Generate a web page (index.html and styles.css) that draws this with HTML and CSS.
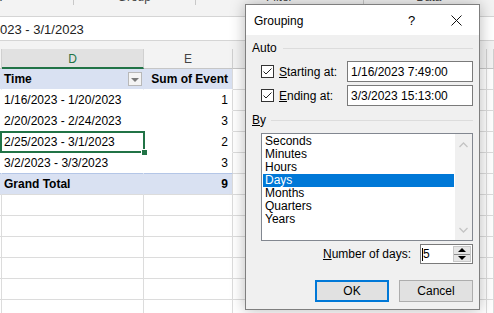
FILE: index.html
```html
<!DOCTYPE html>
<html lang="en">

<head>
  <meta charset="UTF-8">
  <meta name="viewport" content="width=device-width, initial-scale=1.0">
  <title>Grouping</title>
  <link rel="stylesheet" href="styles.css">
</head>

<body>
  <div class="ribbon">
    <div class="groups">
      <div class="group g1"><span>Active Field</span></div>
      <div class="group g2"><span>Group</span></div>
      <div class="group g3"><span>Filter</span></div>
      <div class="group g4"><span>Data</span></div>
    </div>
  </div>

  <div class="formula-bar">
    <span class="formula">023 - 3/1/2023</span>
  </div>

  <div class="sheet">
    <div class="row heads">
      <div class="cell"></div>
      <div class="cell sel-head">D</div>
      <div class="cell">E</div>
      <div class="cell">F</div>
      <div class="cell"></div>
    </div>

    <div class="row pv-head">
      <div class="cell"></div>
      <div class="cell label">
        <b>Time</b>
        <span class="filter-btn"></span>
      </div>
      <div class="cell value"><b>Sum of Event</b></div>
      <div class="cell"></div>
      <div class="cell"></div>
    </div>
    <div class="row pv-body">
      <div class="cell"></div>
      <div class="cell label">1/16/2023 - 1/20/2023</div>
      <div class="cell value">1</div>
      <div class="cell"></div>
      <div class="cell"></div>
    </div>
    <div class="row pv-body">
      <div class="cell"></div>
      <div class="cell label">2/20/2023 - 2/24/2023</div>
      <div class="cell value">3</div>
      <div class="cell"></div>
      <div class="cell"></div>
    </div>
    <div class="row pv-body">
      <div class="cell"></div>
      <div class="cell label active">2/25/2023 - 3/1/2023</div>
      <div class="cell value">2</div>
      <div class="cell"></div>
      <div class="cell"></div>
    </div>
    <div class="row pv-body pv-last">
      <div class="cell"></div>
      <div class="cell label">3/2/2023 - 3/3/2023</div>
      <div class="cell value">3</div>
      <div class="cell"></div>
      <div class="cell"></div>
    </div>
    <div class="row pv-total">
      <div class="cell"></div>
      <div class="cell label"><b>Grand Total</b></div>
      <div class="cell value"><b>9</b></div>
      <div class="cell"></div>
      <div class="cell"></div>
    </div>

    <div class="row"><div class="cell"></div><div class="cell"></div><div class="cell"></div><div class="cell"></div><div class="cell"></div></div>
    <div class="row"><div class="cell"></div><div class="cell"></div><div class="cell"></div><div class="cell"></div><div class="cell"></div></div>
    <div class="row"><div class="cell"></div><div class="cell"></div><div class="cell"></div><div class="cell"></div><div class="cell"></div></div>
    <div class="row"><div class="cell"></div><div class="cell"></div><div class="cell"></div><div class="cell"></div><div class="cell"></div></div>
    <div class="row"><div class="cell"></div><div class="cell"></div><div class="cell"></div><div class="cell"></div><div class="cell"></div></div>
    <div class="row"><div class="cell"></div><div class="cell"></div><div class="cell"></div><div class="cell"></div><div class="cell"></div></div>
  </div>

  <!-- Grouping dialog -->
  <div class="dialog">
    <div class="title-bar">
      <span class="title">Grouping</span>
      <span class="title-btn">?</span>
      <span class="title-btn">
        <svg width="11" height="11" viewBox="0 0 11 11">
          <path d="M0.5 0.5 L10.5 10.5 M10.5 0.5 L0.5 10.5" stroke="#111" stroke-width="1" fill="none" />
        </svg>
      </span>
    </div>

    <div class="dialog-body">
      <div class="section-head">Auto<span class="rule"></span></div>

      <div class="check-row">
        <span class="checkbox">
          <svg width="11" height="11" viewBox="0 0 11 11">
            <polyline points="1.5,5.5 4,8 9.5,2.5" stroke="#222" stroke-width="1" fill="none" />
          </svg>
        </span>
        <span class="check-label"><u>S</u>tarting at:</span>
        <span class="textbox">1/16/2023 7:49:00</span>
      </div>
      <div class="check-row">
        <span class="checkbox">
          <svg width="11" height="11" viewBox="0 0 11 11">
            <polyline points="1.5,5.5 4,8 9.5,2.5" stroke="#222" stroke-width="1" fill="none" />
          </svg>
        </span>
        <span class="check-label"><u>E</u>nding at:</span>
        <span class="textbox">3/3/2023 15:13:00</span>
      </div>

      <div class="section-head by"><u>B</u>y<span class="rule"></span></div>

      <div class="listbox">
        <div class="items">
          <div class="item">Seconds</div>
          <div class="item">Minutes</div>
          <div class="item">Hours</div>
          <div class="item selected">Days</div>
          <div class="item">Months</div>
          <div class="item">Quarters</div>
          <div class="item">Years</div>
        </div>
        <div class="scrollbar">
          <svg width="9" height="6" viewBox="0 0 9 6">
            <polyline points="0.5,5 4.5,1 8.5,5" stroke="#c4c4c4" stroke-width="1.3" fill="none" />
          </svg>
          <svg width="9" height="6" viewBox="0 0 9 6">
            <polyline points="0.5,1 4.5,5 8.5,1" stroke="#c4c4c4" stroke-width="1.3" fill="none" />
          </svg>
        </div>
      </div>

      <div class="number-row">
        <span><u>N</u>umber of days:</span>
        <span class="spinbox">
          <span class="spin-value"><span class="caret"></span>5</span>
          <span class="spin-btns">
            <span class="spin-btn"><span class="tri-up"></span></span>
            <span class="spin-btn"><span class="tri-down"></span></span>
          </span>
        </span>
      </div>

      <div class="buttons">
        <span class="btn default">OK</span>
        <span class="btn">Cancel</span>
      </div>
    </div>
  </div>
</body>

</html>
```

FILE: styles.css
```css
body {
  margin: 0;
  width: 494px;
  height: 313px;
  overflow: hidden;
  position: relative;
  background-color: #ffffff;
  font-family: 'Liberation Sans', Arial, sans-serif;
  font-size: 12px;
  color: #000;
}

/* ribbon strip, only the bottom of the group labels shows */
.ribbon {
  height: 16px;
  background-color: #f3f3f3;
  border-bottom: 1px solid #d5d5d5;
}

.groups {
  display: flex;
  height: 5px;
  margin-left: -130px;
  overflow: hidden;
}

.group {
  border-right: 1px solid #c8c8c8;
  text-align: center;
  color: #444;
  line-height: 12px;
}

.group span {
  display: block;
  margin-top: -9px;
}

.g1 { width: 221px; }
.g2 { width: 132px; }
.g3 { width: 182px; }
.g4 { width: 142px; border-right: none; }

.formula-bar {
  height: 23px;
  background-color: #ffffff;
  border-bottom: 1px solid #d5d5d5;
  display: flex;
  align-items: center;
  overflow: hidden;
}

.formula {
  font-size: 13px;
  color: #222;
  white-space: nowrap;
  padding-top: 1px;
}

/* sheet grid */
.sheet {
  border-top: 8px solid #f3f3f3;
}

.row {
  display: grid;
  grid-template-columns: 2px 142px 89px 254px 1fr;
  height: 21px;
}

.cell {
  box-sizing: border-box;
  border-right: 1px solid #dcdcdc;
  border-bottom: 1px solid #dcdcdc;
  display: flex;
  align-items: center;
  white-space: nowrap;
  overflow: hidden;
}

.heads {
  height: 20px;
  background-color: #f3f3f3;
}

.heads .cell {
  justify-content: center;
  color: #444;
  border-right-color: #d0d0d0;
  border-bottom-color: #c6c6c6;
  padding-top: 1px;
}

.heads .sel-head {
  background-color: #e1e1e1;
  color: #217346;
  border-bottom: 2px solid #217346;
}

.label {
  padding-left: 2px;
}

.value {
  justify-content: flex-end;
  padding-right: 4px;
}

.pv-head .cell:nth-child(-n+3),
.pv-total .cell:nth-child(-n+3) {
  background-color: #d9e1f2;
  border-color: #d9e1f2;
}

.pv-body .cell:nth-child(-n+3) {
  background-color: #ffffff;
  border-color: #ffffff;
}

.pv-head .cell:nth-child(-n+3) {
  border-bottom-color: #ffffff;
}

.pv-last .cell:nth-child(-n+3) {
  border-bottom-color: #b4c6e7;
}

.pv-total .cell:nth-child(-n+3) {
  border-bottom-color: #dcdcdc;
}

.pv-head .cell:nth-child(3),
.pv-body .cell:nth-child(3),
.pv-total .cell:nth-child(3) {
  border-right-color: #dcdcdc;
}

.filter-btn {
  margin-left: auto;
  margin-right: 1px;
  width: 14px;
  height: 14px;
  box-sizing: border-box;
  border: 1px solid #b8b8b8;
  background-color: #f4f4f4;
  display: flex;
  align-items: center;
  justify-content: center;
}

.filter-btn:before {
  content: "";
  border-left: 4px solid transparent;
  border-right: 4px solid transparent;
  border-top: 4px solid #7a7a7a;
  margin-top: 1px;
}

.cell.active {
  position: relative;
  overflow: visible;
}

.cell.active:after {
  content: "";
  position: absolute;
  left: -2px;
  top: -1px;
  width: 145px;
  height: 22px;
  border: 2px solid #217346;
  box-sizing: border-box;
}

.cell.active:before {
  content: "";
  position: absolute;
  left: 139px;
  top: 17px;
  width: 5px;
  height: 5px;
  background-color: #217346;
  border: 1px solid #ffffff;
  z-index: 1;
}

/* dialog */
.dialog {
  position: absolute;
  left: 245px;
  top: 4px;
  width: 235px;
  height: 306px;
  box-sizing: border-box;
  border: 1px solid #7f7f7f;
  background-color: #f0f0f0;
  box-shadow: 0 0 14px rgba(0, 0, 0, 0.28);
  display: flex;
  flex-direction: column;
}

.title-bar {
  height: 30px;
  background-color: #ffffff;
  display: flex;
  align-items: center;
}

.title {
  flex: 1;
  padding-left: 8px;
  padding-top: 1px;
  color: #000;
}

.title-btn {
  width: 45px;
  height: 30px;
  display: flex;
  align-items: center;
  justify-content: center;
  font-size: 13px;
}

.dialog-body {
  padding: 6px 6px 0 6px;
}

.section-head {
  display: flex;
  align-items: center;
  line-height: 15px;
}

.rule {
  flex: 1;
  height: 1px;
  background-color: #dcdcdc;
  margin-left: 6px;
  margin-top: -1px;
}

.section-head.by {
  margin-top: 7px;
}

.section-head.by .rule {
  margin-left: 5px;
}

.check-row {
  display: flex;
  align-items: center;
  padding-left: 9px;
  margin-top: 5px;
}

.check-row + .check-row {
  margin-top: 3px;
}

.checkbox {
  width: 13px;
  height: 13px;
  box-sizing: border-box;
  border: 1px solid #333;
  background-color: #ffffff;
  display: flex;
}

.check-label {
  width: 68px;
  margin-left: 5px;
}

.textbox {
  width: 126px;
  height: 21px;
  box-sizing: border-box;
  border: 1px solid #7a7a7a;
  background-color: #ffffff;
  padding-left: 3px;
  display: flex;
  align-items: center;
}

.listbox {
  margin: 5px 0 0 9px;
  width: 212px;
  height: 108px;
  box-sizing: border-box;
  border: 1px solid #828790;
  background-color: #ffffff;
  display: flex;
}

.items {
  flex: 1;
  padding: 1px 1px 0 1px;
}

.item {
  height: 13px;
  line-height: 13px;
  padding-left: 2px;
}

.item.selected {
  background-color: #0078d7;
  color: #ffffff;
}

.scrollbar {
  width: 17px;
  background-color: #f0f0f0;
  display: flex;
  flex-direction: column;
  justify-content: space-between;
  align-items: center;
  padding: 8px 0 7px 0;
}

.number-row {
  display: flex;
  justify-content: flex-end;
  align-items: center;
  gap: 9px;
  margin-top: 3px;
}

.spinbox {
  width: 53px;
  height: 20px;
  box-sizing: border-box;
  border: 1px solid #7a7a7a;
  background-color: #ffffff;
  display: flex;
}

.spin-value {
  flex: 1;
  display: flex;
  align-items: center;
  padding-left: 1px;
}

.caret {
  width: 1px;
  height: 13px;
  background-color: #000;
  margin-right: 0;
}

.spin-btns {
  width: 16px;
  margin: 1px 1px 1px 0;
  display: flex;
  flex-direction: column;
  border: 1px solid #c8c8c8;
  background-color: #e6e6e6;
}

.spin-btn {
  flex: 1;
  display: flex;
  align-items: center;
  justify-content: center;
}

.spin-btn + .spin-btn {
  border-top: 1px solid #8c8c8c;
}

.tri-up {
  border-left: 4px solid transparent;
  border-right: 4px solid transparent;
  border-bottom: 4px solid #000;
}

.tri-down {
  border-left: 4px solid transparent;
  border-right: 4px solid transparent;
  border-top: 4px solid #000;
}

.buttons {
  display: flex;
  justify-content: flex-end;
  gap: 10px;
  margin-top: 16px;
}

.btn {
  width: 74px;
  height: 22px;
  box-sizing: border-box;
  border: 1px solid #adadad;
  background-color: #e1e1e1;
  display: flex;
  align-items: center;
  justify-content: center;
}

.btn.default {
  border: 2px solid #0078d7;
}
```
